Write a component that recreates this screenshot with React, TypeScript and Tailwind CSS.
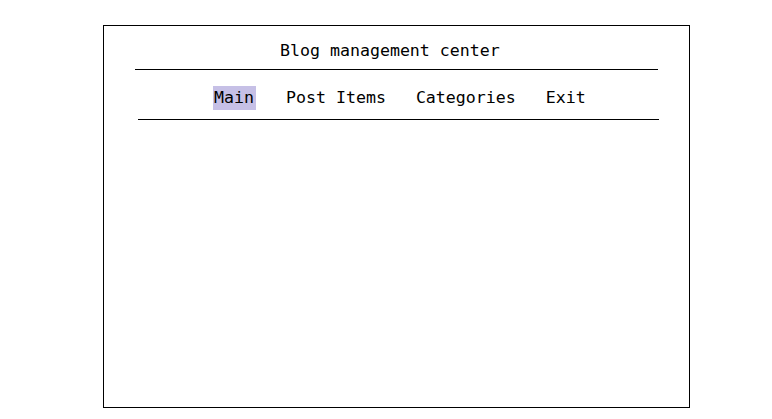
const menu = ['Main', 'Post Items', 'Categories', 'Exit'];

export default function App() {
  return (
    <div className="min-h-[419px] w-[772px] bg-white pl-[103px] pt-[25px] font-['DejaVu_Sans_Mono',monospace] text-[16.6px] text-black">
      <div className="h-[383px] w-[587px] border border-black">
        <div className="mt-[13px] pl-[176px] leading-6">Blog management center</div>
        <div className="ml-[31px] mt-[6px] h-px w-[523px] bg-black" />
        <div className="ml-[109px] mt-[16px] flex gap-[30px] leading-6">
          {menu.map((m, i) => (
            <span
              key={m}
              className={i === 0 ? 'inline-block h-6 bg-[#c6c0e6] pl-[1px] pr-[2px]' : 'inline-block h-6'}
            >
              {m}
            </span>
          ))}
        </div>
        <div className="ml-[34px] mt-[9px] h-px w-[521px] bg-black" />
      </div>
    </div>
  );
}
